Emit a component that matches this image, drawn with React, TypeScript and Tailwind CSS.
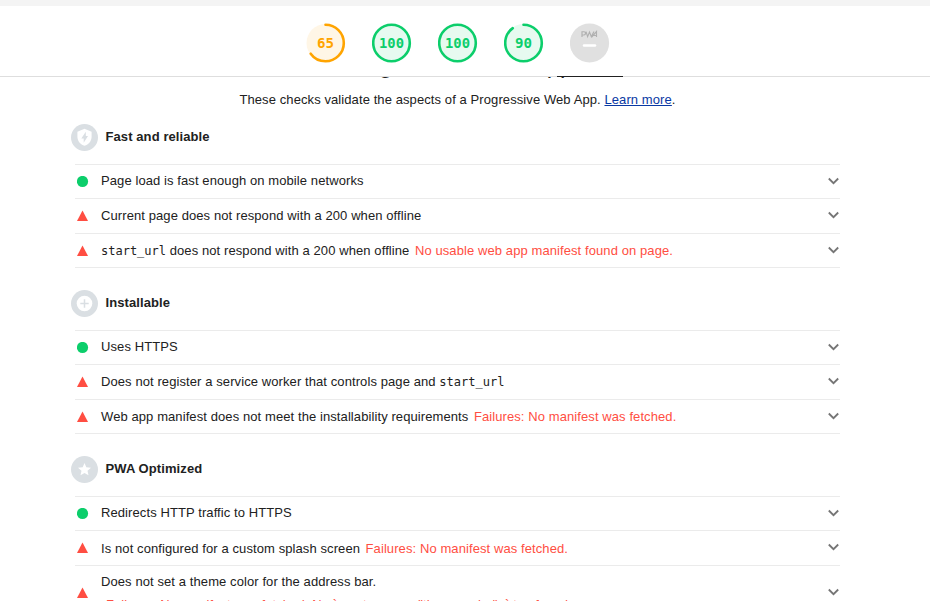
import React from "react";

type Item = { pass?: boolean; text: React.ReactNode; note?: string; h: string };

const Code = ({ children }: { children: React.ReactNode }) => (
  <code className="font-['DejaVu_Sans_Mono',monospace] text-[12px] leading-[14px] tracking-normal">{children}</code>
);

const Gauge = ({ score, color, fill }: { score: number; color: string; fill: string }) => (
  <svg width="40" height="40" viewBox="0 0 40 40">
    <circle cx="19.5" cy="20" r="19" fill={fill} />
    <circle
      cx="19.5" cy="20" r="18.3" fill="none" stroke={color} strokeWidth="2.6" strokeLinecap="round"
      pathLength={100} strokeDasharray={score === 100 ? undefined : `${score} 100`} transform="rotate(-90 19.5 20)"
    />
    <text x="19.5" y="25" textAnchor="middle" fill={color} className="font-['DejaVu_Sans_Mono',monospace] text-[14px] font-bold tracking-normal" textLength={score === 100 ? 25 : 17} lengthAdjust="spacingAndGlyphs">
      {score}
    </text>
  </svg>
);

const GroupIcon = ({ kind }: { kind: string }) => (
  <svg width="27" height="27" viewBox="0 0 27 27" className="shrink-0">
    <circle cx="13.5" cy="13.5" r="13.5" fill="#dadfe3" />
    {kind === "fast" && (
      <>
        <path d="M13.5 4.8 20.6 7.8V12.8C20.6 17 17.6 20.6 13.5 21.8 9.4 20.6 6.4 17 6.4 12.8V7.8Z" fill="white" />
        <path d="M14.8 7.7V12H17L12.7 18.8V14.5H10.3Z" fill="#dadfe3" />
      </>
    )}
    {kind === "install" && (
      <>
        <circle cx="13.5" cy="13.5" r="7.8" fill="white" />
        <path d="M13.5 9.3V17.7M9.3 13.5H17.7" stroke="#dadfe3" strokeWidth="1.5" />
      </>
    )}
    {kind === "star" && (
      <path d="M13.5 7 15.3 11.3 20 11.7 16.5 14.8 17.5 19.3 13.5 16.9 9.5 19.3 10.5 14.8 7 11.7 11.7 11.3Z" fill="white" />
    )}
  </svg>
);

const Chevron = () => (
  <svg width="12" height="8" viewBox="0 0 12 8" className="mb-[2px] shrink-0">
    <path d="M.8 1.5 5.5 6.2 10.2 1.5" fill="none" stroke="#757575" strokeWidth="1.8" />
  </svg>
);

const Row = ({ item }: { item: Item }) => (
  <div className={`flex items-center border-t border-[#ebebeb] ${item.h}`}>
    <svg width="12" height="12" viewBox="0 0 12 12" className="ml-[2px] mr-[12px] shrink-0">
      {item.pass ? <circle cx="5.5" cy="5.5" r="5.6" fill="#0cce6b" /> : <path d="M5.5.4 11 11H0Z" fill="#ff4e42" />}
    </svg>
    <div className={`flex-1 whitespace-nowrap ${item.pass ? "pb-[2px]" : ""}`}>
      {item.text}
      {item.note && <span className="ml-[5.5px] text-[#ff4e42]">{item.note}</span>}
    </div>
    <Chevron />
  </div>
);

const groups: { title: string; kind: string; items: Item[] }[] = [
  {
    title: "Fast and reliable", kind: "fast",
    items: [
      { pass: true, text: "Page load is fast enough on mobile networks", h: "h-[34px]" },
      { text: "Current page does not respond with a 200 when offline", h: "h-[35px]" },
      { text: <><Code>start_url</Code> does not respond with a 200 when offline</>, note: "No usable web app manifest found on page.", h: "h-[34px]" },
    ],
  },
  {
    title: "Installable", kind: "install",
    items: [
      { pass: true, text: "Uses HTTPS", h: "h-[34px]" },
      { text: <>Does not register a service worker that controls page and <Code>start_url</Code></>, h: "h-[35px]" },
      { text: "Web app manifest does not meet the installability requirements", note: "Failures: No manifest was fetched.", h: "h-[34px]" },
    ],
  },
  {
    title: "PWA Optimized", kind: "star",
    items: [
      { pass: true, text: "Redirects HTTP traffic to HTTPS", h: "h-[34px]" },
      { text: "Is not configured for a custom splash screen", note: "Failures: No manifest was fetched.", h: "h-[35px] [&>div]:pt-[2px]" },
    ],
  },
];

export default function App() {
  return (
    <div className="flex h-[601px] w-[930px] flex-col overflow-hidden bg-white font-['Liberation_Sans',Arial,sans-serif] text-[13px] leading-[18px] tracking-[0.09px] text-[#212121]">
      <div className="h-[6px] shrink-0 bg-[#f4f4f4]" />
      <header className="relative flex h-[71px] shrink-0 justify-center gap-[26px] border-b border-[#dedede] pr-[14px] pt-[17px]">
        <Gauge score={65} color="#ffa400" fill="#fff6e6" />
        <Gauge score={100} color="#0cce6b" fill="#e7faf0" />
        <Gauge score={100} color="#0cce6b" fill="#e7faf0" />
        <Gauge score={90} color="#0cce6b" fill="#e7faf0" />
        <svg width="40" height="40" viewBox="0 0 40 40">
          <circle cx="19.5" cy="20" r="19.6" fill="#e0e0e0" />
          <path d="M12 14V8.7H14Q15.5 8.7 15.5 10.3T14 12H12.1M16 8.6 17.6 13.6 19.5 9 21.3 13.6 24 8.6M21.7 14 26.5 8.5V14M23.5 12.5H26.6" fill="none" stroke="#b0b0b0" strokeWidth="1.15" />
          <path d="M14 22.6H25" stroke="white" strokeWidth="2.5" strokeLinecap="round" />
        </svg>
        <div className="absolute -bottom-px left-[557px] h-px w-[66px] bg-[#212121]" />
      </header>
      <main className="flex min-h-0 flex-1 flex-col overflow-hidden pr-[15px]">
        <h1 className="-mt-[24px] h-[26px] shrink-0 text-center text-[24px] leading-[24px] [clip-path:inset(24px_0_-4px_0)]">Progressive Web App</h1>
        <p className="mt-[12px] shrink-0 whitespace-nowrap text-center tracking-[0.09px]">
          These checks validate the aspects of a Progressive Web App. <a className="text-[#0938a3] underline underline-offset-1">Learn more</a>.
        </p>
        <div className="flex flex-col pl-[75px] pt-[15px]">
          {groups.map((g) => (
            <section key={g.title} className={`flex shrink-0 flex-col ${g.kind === "star" ? "h-[109px]" : "h-[166px]"}`}>
              <div className="-ml-[4px] flex h-[40px] shrink-0 gap-[7.5px]">
                <GroupIcon kind={g.kind} />
                <h2 className="pt-[4px] font-bold">{g.title}</h2>
              </div>
              <div className={`flex w-[765px] flex-col ${g.kind === "star" ? "" : "border-b border-[#ebebeb]"}`}>
                {g.items.map((item, i) => <Row key={i} item={item} />)}
              </div>
            </section>
          ))}
          <div className="flex h-[54px] w-[765px] shrink-0 items-center border-t border-[#ebebeb]">
            <svg width="12" height="12" viewBox="0 0 12 12" className="ml-[2px] mr-[12px] shrink-0">
              <path d="M5.5.4 11 11H0Z" fill="#ff4e42" />
            </svg>
            <div className="flex-1 whitespace-nowrap leading-[23px]">
              <div>Does not set a theme color for the address bar.</div>
              <div className="pl-[5px] text-[#ff4e42]">{'Failures: No manifest was fetched, No `<meta name="theme-color">` tag found.'}</div>
            </div>
            <Chevron />
          </div>
        </div>
      </main>
    </div>
  );
}
